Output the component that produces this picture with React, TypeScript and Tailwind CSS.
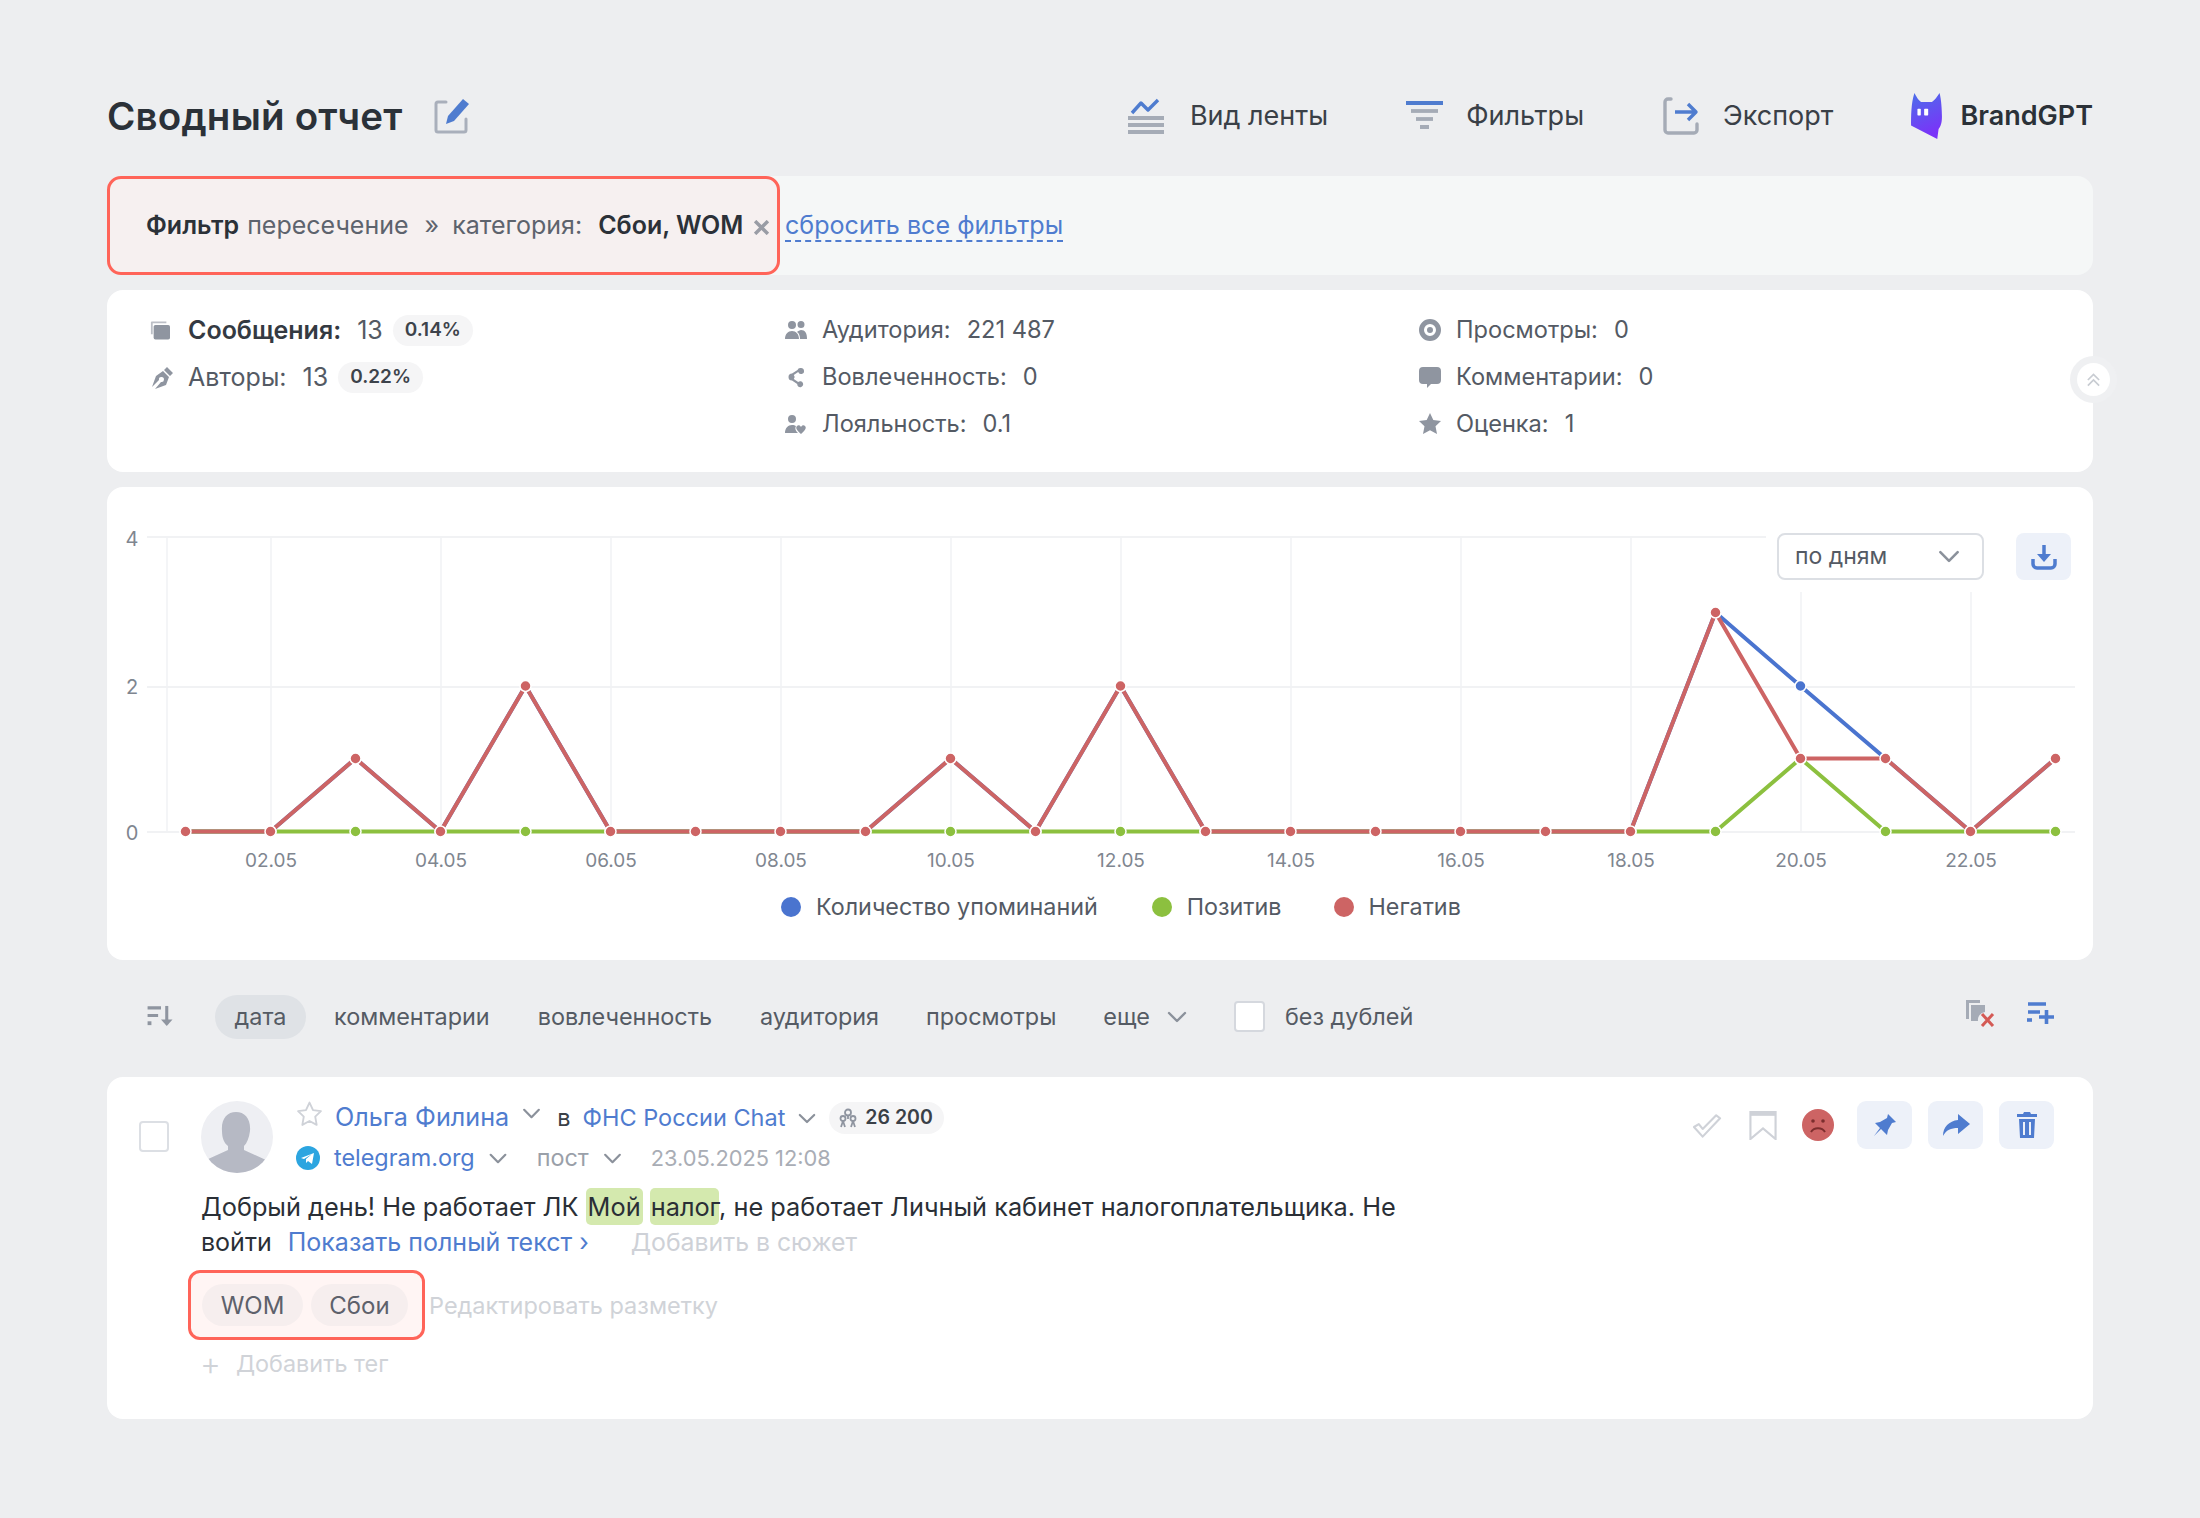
import React from "react";

const BLUE = "#4f7ccf";
const GRAY = "#8f95a0";

function Chevron({ className = "" }: { className?: string }) {
  return (
    <svg viewBox="0 0 20 12" className={className} fill="none" stroke="#8b919b" strokeWidth="2.400" strokeLinecap="round" strokeLinejoin="round">
      <path d="M2 2l8 8 8-8" />
    </svg>
  );
}

function Header() {
  return (
    <div className="flex h-[48px] items-center">
      <h1 className="text-[38.500px] font-semibold leading-none tracking-[0.2px] text-[#2b3138]">Сводный отчет</h1>
      <svg viewBox="0 0 38 38" className="ml-[30px] h-[38px] w-[38px]" fill="none">
        <path d="M13 5H5a2 2 0 0 0-2 2v26a2 2 0 0 0 2 2h26a2 2 0 0 0 2-2V22" stroke="#a9afbb" strokeWidth="3" strokeLinecap="round" />
        <path d="M30 2l6 5-15 17-8 3 2-8z" fill={BLUE} />
      </svg>
      <div className="ml-auto flex items-center text-[27px] text-[#3a4047]">
        <svg viewBox="0 0 36 38" className="h-[38px] w-[36px]" fill="none">
          <path d="M1 15L10 5l7 7L27 2" transform="translate(3 1)" stroke={BLUE} strokeWidth="3.400" strokeLinejoin="round" />
          <path d="M0 21h36M0 28h36M0 35h36" stroke="#a5abb6" strokeWidth="3.800" />
        </svg>
        <span className="ml-[26px]">Вид ленты</span>
        <svg viewBox="0 0 37 30" className="ml-[78px] h-[30px] w-[37px]" fill="none">
          <path d="M0 2h37" stroke={BLUE} strokeWidth="4" />
          <path d="M5 10h27" stroke="#a5abb6" strokeWidth="3.800" />
          <path d="M10 18h17" stroke="#a5abb6" strokeWidth="3.800" />
          <path d="M14 26h9" stroke="#a5abb6" strokeWidth="4" />
        </svg>
        <span className="ml-[23px]">Фильтры</span>
        <svg viewBox="0 0 36 38" className="ml-[79px] h-[38px] w-[36px]" fill="none">
          <path d="M8 2H5a3 3 0 0 0-3 3v28a3 3 0 0 0 3 3h26a3 3 0 0 0 3-3v-6" stroke="#a5abb6" strokeWidth="3.400" strokeLinecap="round" />
          <path d="M12 15h20M25 7l8 8-8 8" stroke={BLUE} strokeWidth="3.400" strokeLinejoin="round" />
        </svg>
        <span className="ml-[24px]">Экспорт</span>
        <svg viewBox="0 0 92 137" className="ml-[78px] h-[46px] w-[31px]">
          <defs>
            <linearGradient id="cat" x1="0" y1="0" x2="0.3" y2="1">
              <stop offset="0" stopColor="#4b6fea" />
              <stop offset="1" stopColor="#7a33f8" />
            </linearGradient>
          </defs>
          <path d="M10 0C14 8 22 22 30 27H62C70 22 80 8 85 0C90 20 92 50 92 70C92 90 88 100 82 107L78 137L0 97C0 70 0 30 10 0Z" fill="url(#cat)" />
          <rect x="19" y="47" width="10" height="20" rx="2" fill="#fff" />
          <rect x="39" y="47" width="12" height="20" rx="2" fill="#fff" />
        </svg>
        <span className="ml-[18px] font-semibold text-[#2b3138]">BrandGPT</span>
      </div>
    </div>
  );
}

function FilterBar() {
  return (
    <div className="mt-[36px] flex h-[99px] items-stretch rounded-[16px] bg-[#f5f7f7]">
      <div className="flex w-[673px] items-center rounded-[14px] border-[3px] border-[#ff6459] bg-[#f6f0f0] pl-[36px] text-[25px] text-[#5d636d]">
        <span className="font-semibold text-[#2b3138]">Фильтр</span>
        <span className="ml-[8px]">пересечение</span>
        <span className="ml-[16px]">»</span>
        <span className="ml-[13px]">категория:</span>
        <span className="ml-[16px] font-semibold text-[#2b3138]">Сбои, WOM</span>
        <svg viewBox="0 0 14 14" className="ml-[11px] mt-[4px] h-[15px] w-[15px]" stroke="#999ca5" strokeWidth="3.200">
          <path d="M1 1l12 12M13 1L1 13" />
        </svg>
      </div>
      <div className="ml-[5px] flex items-center">
        <span className="border-b-2 border-dashed border-[#4f7ccf] text-[25.100px] leading-[30px] text-[#4f7ccf]">сбросить все фильтры</span>
      </div>
    </div>
  );
}

function StatRow({ icon, label, value, bold, badge, size }: { icon: React.ReactNode; label: string; value: string; bold?: boolean; badge?: string; size: string }) {
  return (
    <div className={`flex h-[47px] items-center text-[#545a64] ${size}`}>
      <span className="flex w-[38px] items-center">{icon}</span>
      <span className={bold ? "font-semibold text-[#343a42]" : ""}>{label}</span>
      <span className="ml-[16px]">{value}</span>
      {badge && (
        <span className="ml-[10px] flex h-[31px] items-center rounded-full bg-[#f5f5f6] px-[12px] text-[19px] font-semibold text-[#3d434b]">{badge}</span>
      )}
    </div>
  );
}

function Ic({ d, w = 24, h = 24 }: { d: string; w?: number; h?: number }) {
  return (
    <svg viewBox="0 0 24 24" style={{ width: w, height: h }} fill={GRAY}>
      <path d={d} />
    </svg>
  );
}

const S1 = "text-[25px]";
const S2 = "text-[23.600px]";

function Stats() {
  return (
    <div className="relative mt-[15px] h-[182px] rounded-[16px] bg-white pt-[16px]">
      <div className="flex">
        <div className="ml-[43px] w-[634px] pt-px">
          <StatRow
            size={S1}
            bold
            label="Сообщения:"
            value="13"
            badge="0.14%"
            icon={
              <svg viewBox="0 0 22 20" className="h-[19px] w-[20px]" fill={GRAY}>
                <path d="M2 0h16v2H3v12H1V1a1 1 0 0 1 1-1z" opacity=".6" />
                <rect x="4" y="4" width="18" height="16" rx="2" />
              </svg>
            }
          />
          <StatRow
            size={S1}
            label="Авторы:"
            value="13"
            badge="0.22%"
            icon={
              <svg viewBox="0 0 24 24" className="h-[24px] w-[24px]" fill={GRAY}>
                <path d="M17 1l6 6-3 3-6-6zM13 5l6 6-3 8-11 4 6-7a2.500 2.500 0 1 0-2-2l-7 7 4-11z" />
              </svg>
            }
          />
        </div>
        <div className="w-[634px]">
          <StatRow size={S2} label="Аудитория:" value="221 487" icon={<Ic d="M8 3a4 4 0 1 1 0 8 4 4 0 0 1 0-8zm9 0a3.500 3.500 0 1 1 0 7 3.500 3.500 0 0 1 0-7zM1 21c0-5 3-8 7-8s7 3 7 8zm15 0c0-3-1-6-3-7 1-1 3-2 4-2 4 0 6 3 6 9z" />} />
          <StatRow size={S2} label="Вовлеченность:" value="0" icon={<Ic d="M17 3a3 3 0 1 1-2.800 4L9.800 10a3 3 0 0 1 0 4l4.400 3a3 3 0 1 1-1 2L8 15.500a3.500 3.500 0 1 1 0-7L13.500 5A3 3 0 0 1 17 3z" />} />
          <StatRow size={S2} label="Лояльность:" value="0.1" icon={<Ic d="M8 3a4 4 0 1 1 0 8 4 4 0 0 1 0-8zM1 21c0-5 3-8 7-8 2 0 3 .5 4 1-1 2-1 4 2 7zm16-6c1-2 3-2 4-1s2 3-4 8c-6-5-5-7-4-8s3-1 4 1z" />} />
        </div>
        <div>
          <StatRow size={S2} label="Просмотры:" value="0" icon={<Ic d="M12 1a11 11 0 1 1 0 22 11 11 0 0 1 0-22zm0 5a6 6 0 1 0 0 12 6 6 0 0 0 0-12zm0 3a3 3 0 1 1 0 6 3 3 0 0 1 0-6z" />} />
          <StatRow size={S2} label="Комментарии:" value="0" icon={<Ic d="M5 2h14a4 4 0 0 1 4 4v9a4 4 0 0 1-4 4h-6l-4 4v-4H5a4 4 0 0 1-4-4V6a4 4 0 0 1 4-4z" />} />
          <StatRow size={S2} label="Оценка:" value="1" icon={<Ic d="M12 1l3.300 7 7.700 1-5.500 5.300L19 22l-7-3.700L5 22l1.500-7.700L1 9l7.700-1z" />} />
        </div>
      </div>
      <div className="absolute right-[-24px] top-[66px] flex h-[47px] w-[47px] items-center justify-center rounded-full bg-[#eff0f2]">
        <div className="flex h-[33px] w-[33px] items-center justify-center rounded-full bg-white">
          <svg viewBox="0 0 16 18" className="h-[18px] w-[15px]" fill="none" stroke="#c8ccd2" strokeWidth="1.800">
            <path d="M2 9l6-6 6 6M2 15l6-6 6 6" />
          </svg>
        </div>
      </div>
    </div>
  );
}

const X0 = 185.5;
const DX = 85;
const yOf = (v: number) => [831.5, 758.5, 686, 612.5][v];
const xOf = (d: number) => X0 + (d - 1) * DX;
const CARD_X = 107;
const CARD_Y = 487;

const neg = [0, 0, 1, 0, 2, 0, 0, 0, 0, 1, 0, 2, 0, 0, 0, 0, 0, 0, 3, 1, 1, 0, 1];
const pos = [0, 0, 0, 0, 0, 0, 0, 0, 0, 0, 0, 0, 0, 0, 0, 0, 0, 0, 0, 1, 0, 0, 0];
const all = [0, 0, 1, 0, 2, 0, 0, 0, 0, 1, 0, 2, 0, 0, 0, 0, 0, 0, 3, 2, 1, 0, 1];

function pts(vals: number[]) {
  return vals.map((v, i) => `${xOf(i + 1) - CARD_X},${yOf(v) - CARD_Y}`).join(" ");
}

function Series({ vals, color, show }: { vals: number[]; color: string; show: (i: number) => boolean }) {
  return (
    <g>
      <polyline points={pts(vals)} fill="none" stroke={color} strokeWidth="4" strokeLinejoin="round" />
      {vals.map((v, i) =>
        show(i) ? <circle key={i} cx={xOf(i + 1) - CARD_X} cy={yOf(v) - CARD_Y} r="5.500" fill={color} stroke="#fff" strokeWidth="1.500" /> : null
      )}
    </g>
  );
}

function Chart() {
  const ticks = [
    [271, "02.05"], [441, "04.05"], [611, "06.05"], [781, "08.05"], [951, "10.05"], [1121, "12.05"],
    [1291, "14.05"], [1461, "16.05"], [1631, "18.05"], [1801, "20.05"], [1971, "22.05"],
  ] as [number, string][];
  const hl = [[537, "4", 9], [687, "2", 7], [832, "0", 8]] as [number, string, number][];
  return (
    <div className="relative mt-[15px] h-[473px] rounded-[16px] bg-white">
      <svg viewBox="0 0 1986 390" className="block h-[390px] w-[1986px]" style={{ fontFamily: "Inter, sans-serif" }}>
        {hl.map(([y, t, o]) => (
          <g key={t}>
            <line x1={147 - CARD_X} x2={2075 - CARD_X} y1={y - CARD_Y} y2={y - CARD_Y} stroke="#f1f2f4" strokeWidth="2" />
            <text x="25" y={y - CARD_Y + o} fontSize="20" fill="#7f8690" textAnchor="middle">{t}</text>
          </g>
        ))}
        {[167, ...ticks.map((t) => t[0])].map((x) => (
          <line key={x} x1={x - CARD_X} x2={x - CARD_X} y1={537 - CARD_Y} y2={832 - CARD_Y} stroke="#f1f2f4" strokeWidth="1.500" />
        ))}
        {ticks.map(([x, t]) => (
          <text key={t} x={x - CARD_X} y={866.5 - CARD_Y} fontSize="19" fill="#7f8690" textAnchor="middle">{t}</text>
        ))}
        <Series vals={all} color="#4a74cf" show={(i) => i === 19} />
        <Series vals={pos} color="#8cc03f" show={() => true} />
        <Series vals={neg} color="#cd6464" show={(i) => neg[i] > 0 || [0, 1, 3, 5, 6, 7, 8, 10, 12, 13, 14, 15, 16, 17, 21].includes(i)} />
      </svg>
      <div className="mt-[13px] flex items-center pl-[674px] text-[23.300px] text-[#545a64]">
        <span className="h-[20px] w-[20px] rounded-full bg-[#4a74cf]" />
        <span className="ml-[15px]">Количество упоминаний</span>
        <span className="ml-[54px] h-[20px] w-[20px] rounded-full bg-[#8cc03f]" />
        <span className="ml-[15px]">Позитив</span>
        <span className="ml-[52px] h-[20px] w-[20px] rounded-full bg-[#cd6464]" />
        <span className="ml-[15px]">Негатив</span>
      </div>
      <div className="absolute right-0 top-[46px] flex h-[59px] items-start gap-[32px] bg-white pl-[11px] pr-[22px]">
        <div className="flex h-[47px] w-[207px] items-center justify-between rounded-[8px] border-2 border-[#dcdfe4] bg-white pl-[16px] pr-[22px] text-[23px] text-[#545a64]">
          <span>по дням</span>
          <Chevron className="h-[13px] w-[22px]" />
        </div>
        <div className="flex h-[47px] w-[55px] items-center justify-center rounded-[8px] bg-[#edf1f9]">
          <svg viewBox="0 0 26 26" className="h-[26px] w-[26px]" fill="none">
            <path d="M13 1v13" stroke={BLUE} strokeWidth="3.500" />
            <path d="M6 10h14l-7 8z" fill={BLUE} />
            <path d="M2 15v5a4 4 0 0 0 4 4h14a4 4 0 0 0 4-4v-5" stroke={BLUE} strokeWidth="3.500" />
          </svg>
        </div>
      </div>
    </div>
  );
}

function Toolbar() {
  return (
    <div className="flex h-[117px] items-center pb-[4px] text-[23.400px] text-[#555b64]">
      <svg viewBox="0 0 28 24" className="ml-[40px] h-[23px] w-[28px]" fill="none" stroke="#8f95a0" strokeWidth="3.200">
        <path d="M0 3h14M0 11h11" />
        <path d="M0 19h4" strokeWidth="4" />
        <path d="M20 1v19" />
        <path d="M14 15l6 7 6-7z" fill="#8f95a0" stroke="none" />
      </svg>
      <span className="ml-[40px] flex h-[44px] w-[91px] items-center justify-center rounded-full bg-[#dfe2e6]">дата</span>
      <span className="ml-[28px]">комментарии</span>
      <span className="ml-[48px]">вовлеченность</span>
      <span className="ml-[48px]">аудитория</span>
      <span className="ml-[47px]">просмотры</span>
      <span className="ml-[47px]">еще</span>
      <Chevron className="ml-[17px] h-[12px] w-[20px]" />
      <span className="ml-[47px] h-[31px] w-[31px] rounded-[4px] border-2 border-[#d5d8de] bg-white" />
      <span className="ml-[20px]">без дублей</span>
      <div className="ml-auto mr-[38px] mt-[-8px] flex items-center gap-[30px]">
        <svg viewBox="0 0 30 28" className="h-[28px] w-[30px]" fill="none">
          <path d="M1 1h14v3H4v16H1z" fill="#a5abb6" />
          <path d="M6 6h14v7a8 8 0 0 0-7 9H6z" fill="#a5abb6" />
          <path d="M17 15l11 12M28 15L17 27" stroke="#d45a55" strokeWidth="3" />
        </svg>
        <svg viewBox="0 0 30 22" className="h-[22px] w-[30px]" fill="none" stroke={BLUE} strokeWidth="3.600">
          <path d="M3 2h18M3 10h12" />
          <path d="M2 18h5" />
          <path d="M14 15h15M21.500 8v14" />
        </svg>
      </div>
    </div>
  );
}

function ActionBtn({ children }: { children: React.ReactNode }) {
  return <div className="flex h-[48px] w-[55px] items-center justify-center rounded-[9px] bg-[#edf1f9]">{children}</div>;
}

function Post() {
  return (
    <div className="relative h-[342px] rounded-[16px] bg-white pl-[32px] pr-[39px] pt-[23px]">
      <div className="flex">
        <span className="mt-[21px] h-[31px] w-[30px] shrink-0 rounded-[4px] border-2 border-[#dcdfe4]" />
        <div className="ml-[32px] mt-px h-[72px] w-[72px] shrink-0 overflow-hidden rounded-full bg-[#eeeff3]">
          <svg viewBox="0 0 72 72" className="h-[72px] w-[72px]" fill="#b6b9c4">
            <path d="M35 11c9 0 15 7 14 19-1 7-3 12-6 15v4l22 10v13H5V59l22-10v-4c-4-3-6-8-6-15-1-12 5-19 14-19z" />
          </svg>
        </div>
        <div className="ml-[23px] flex-1">
          <div className="mt-px flex h-[34px] items-center">
            <svg viewBox="0 0 26 26" className="mt-[-8px] h-[28px] w-[27px]" fill="none" stroke="#cfd2d8" strokeWidth="1.800" strokeLinejoin="round">
              <path d="M13 2l3.400 7.300 7.600 1-5.500 5.300 1.400 7.900-6.900-3.800-6.900 3.800 1.400-7.900L2 10.300l7.600-1z" />
            </svg>
            <span className="ml-[12px] text-[25.200px] text-[#4f7ccf]">Ольга Филина</span>
            <Chevron className="ml-[13px] mt-[-9px] h-[11px] w-[19px]" />
            <span className="ml-[16px] text-[23.500px] text-[#3a4047]">в</span>
            <span className="ml-[12px] text-[23.500px] text-[#4f7ccf]">ФНС России Chat</span>
            <Chevron className="ml-[13px] h-[11px] w-[18px]" />
            <span className="ml-[13px] flex h-[32px] items-center gap-[7px] rounded-full bg-[#f5f5f6] pl-[9px] pr-[11px] text-[19.500px] font-semibold text-[#3a4047]">
              <svg viewBox="0 0 20 20" className="h-[20px] w-[20px]" fill="none" stroke="#8f95a0" strokeWidth="1.800">
                <circle cx="10" cy="4.500" r="3" />
                <circle cx="5" cy="10.500" r="2.500" />
                <circle cx="15" cy="10.500" r="2.500" />
                <path d="M10 8v3M5 13l-2 6M5 13l2 6M15 13l-2 6M15 13l2 6" />
              </svg>
              26 200
            </span>
          </div>
          <div className="mt-[7px] flex h-[32px] items-center text-[23.400px]">
            <svg viewBox="0 0 24 24" className="h-[24px] w-[24px]">
              <circle cx="12" cy="12" r="12" fill="#2ca5e0" />
              <path d="M5 12l13-5-2 11-4-3-2 2v-4l6-5-8 5z" fill="#fff" />
            </svg>
            <span className="ml-[14px] text-[#4f7ccf]">telegram.org</span>
            <Chevron className="ml-[13px] h-[11px] w-[20px]" />
            <span className="ml-[29px] text-[#9aa0a9]">пост</span>
            <Chevron className="ml-[14px] h-[11px] w-[19px]" />
            <span className="ml-[29px] text-[21.800px] text-[#a9adb5]">23.05.2025 12:08</span>
          </div>
        </div>
        <div className="flex items-start">
          <svg viewBox="0 0 30 24" className="mt-[14px] h-[24px] w-[29px]" fill="none" stroke="#cfd2d8" strokeWidth="2.200" strokeLinejoin="round">
            <path d="M1 13l5-3 4 5L24 1l4 3-18 19z" />
          </svg>
          <svg viewBox="0 0 28 30" className="ml-[27px] mt-[11px] h-[29px] w-[28px]" fill="none" stroke="#cfd2d8" strokeWidth="2.200">
            <path d="M1 1h26v28L14 18 1 29z" />
            <path d="M1 3h26" strokeWidth="4" />
          </svg>
          <svg viewBox="0 0 32 32" className="ml-[25px] mt-[9px] h-[32px] w-[32px]">
            <circle cx="16" cy="16" r="16" fill="#cd6464" />
            <circle cx="11" cy="12" r="1.800" fill="#7c2d2d" />
            <circle cx="21" cy="12" r="1.800" fill="#7c2d2d" />
            <path d="M9 23c3-5 11-5 14 0" stroke="#7c2d2d" strokeWidth="2" fill="none" />
          </svg>
          <div className="ml-[23px] mt-px flex gap-[16px]">
            <ActionBtn>
              <svg viewBox="0 0 24 24" className="h-[24px] w-[24px]" fill={BLUE}>
                <path d="M15 1l8 8-4 1-4 7-1 5-6-6-7 7 6-8-5-5 5-1 7-4z" />
              </svg>
            </ActionBtn>
            <ActionBtn>
              <svg viewBox="0 0 28 24" className="h-[24px] w-[28px]" fill={BLUE}>
                <path d="M16 1l12 10-12 10v-6C9 15 4 17 1 23c0-9 6-15 15-16z" />
              </svg>
            </ActionBtn>
            <ActionBtn>
              <svg viewBox="0 0 20 26" className="h-[26px] w-[20px]" fill={BLUE}>
                <path d="M7 0h6l1 2h6v3H0V2h6z" />
                <path d="M2 7h16l-1 19H3zm4 3v13h2V10zm6 0v13h2V10z" fillRule="evenodd" />
              </svg>
            </ActionBtn>
          </div>
        </div>
      </div>
      <div className="ml-[62px] mt-[15px] w-[1230px] text-[25.300px] leading-[35px] text-[#2a2f36]">
        <div>
          Добрый день! Не работает ЛК <span className="rounded-[5px] bg-[#d4e9ae] px-[2px] py-[3px]">Мой</span> <span className="rounded-[5px] bg-[#d4e9ae] pl-[1px] py-[3px]">налог</span>, не работает Личный кабинет налогоплательщика. Не
        </div>
        <div className="mt-px flex text-[25px]">
          <span>войти</span>
          <span className="ml-[16px] text-[#4f7ccf]">Показать полный текст ›</span>
          <span className="ml-[42px] text-[24.800px] text-[#ced1d7]">Добавить в сюжет</span>
        </div>
      </div>
      <div className="ml-[49px] mt-[10px] flex items-center text-[24px]">
        <div className="flex h-[70px] w-[237px] items-center gap-[8px] rounded-[12px] border-[3px] border-[#ff6459] bg-[#fff5f4] pl-[11px]">
          <span className="flex h-[42px] w-[101px] items-center justify-center rounded-full bg-[#f6eeee] pt-px text-[#5d616b]">WOM</span>
          <span className="flex h-[42px] w-[97px] items-center justify-center rounded-full bg-[#f6eeee] pt-px text-[#5d616b]">Сбои</span>
        </div>
        <span className="ml-[4px] pt-px text-[23.500px] text-[#d0d3d8]">Редактировать разметку</span>
      </div>
      <div className="ml-[61px] mt-[7px] flex h-[34px] items-center text-[23.400px] text-[#d0d3d8]">
        <span className="text-[32px] font-light leading-none">+</span>
        <span className="ml-[15px]">Добавить тег</span>
      </div>
    </div>
  );
}

export default function App() {
  return (
    <div className="min-h-[1518px] bg-[#edeef0] px-[107px] pt-[92px]" style={{ fontFamily: "Inter, 'Noto Sans', sans-serif" }}>
      <Header />
      <FilterBar />
      <Stats />
      <Chart />
      <Toolbar />
      <Post />
    </div>
  );
}
